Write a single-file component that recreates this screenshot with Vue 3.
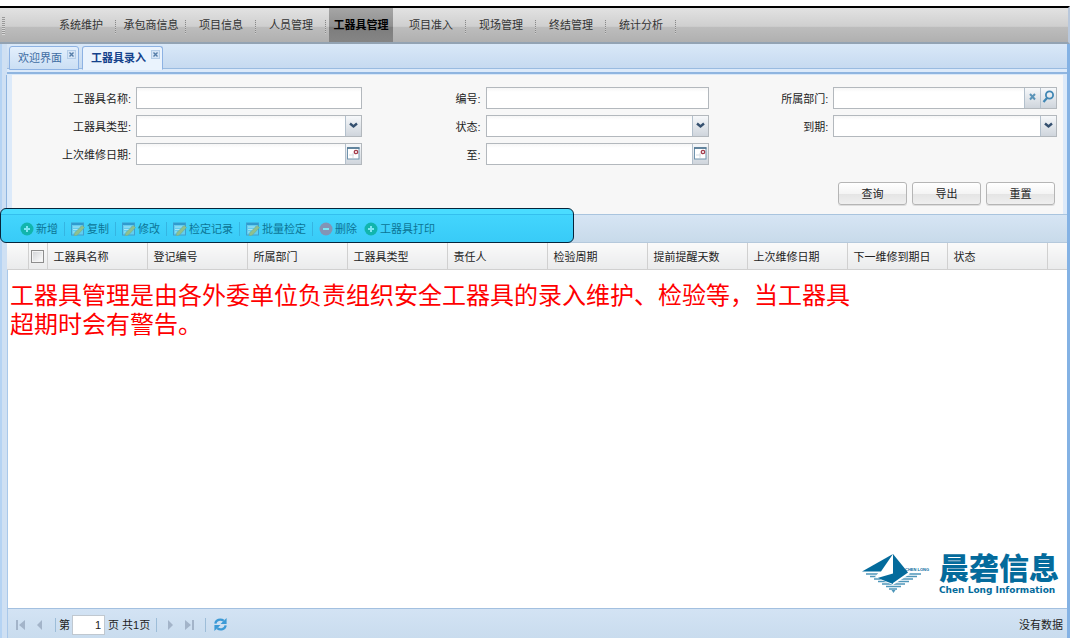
<script setup>
import { ref } from 'vue'

const menus = ['系统维护', '承包商信息', '项目信息', '人员管理', '工器具管理', '项目准入', '现场管理', '终结管理', '统计分析']
const activeMenu = ref('工器具管理')

const tabs = ['欢迎界面', '工器具录入']
const activeTab = ref('工器具录入')

const fields = [
  { id: 'name', label: '工器具名称', triggers: [] },
  { id: 'code', label: '编号', triggers: [] },
  { id: 'dept', label: '所属部门', triggers: ['clear', 'search'] },
  { id: 'type', label: '工器具类型', triggers: ['arrow'] },
  { id: 'state', label: '状态', triggers: ['arrow'] },
  { id: 'due', label: '到期', triggers: ['arrow'] },
  { id: 'from', label: '上次维修日期', triggers: ['date'] },
  { id: 'to', label: '至', triggers: ['date'] }
]
const triggerNames = { clear: '清除', search: '查找', arrow: '展开', date: '选择日期' }

const actions = [
  { text: '新增', icon: 'add', sep: true },
  { text: '复制', icon: 'edit', sep: true },
  { text: '修改', icon: 'edit', sep: true },
  { text: '检定记录', icon: 'edit', sep: true },
  { text: '批量检定', icon: 'edit', sep: true },
  { text: '删除', icon: 'remove', sep: false },
  { text: '工器具打印', icon: 'add', sep: false }
]

const columns = ['工器具名称', '登记编号', '所属部门', '工器具类型', '责任人', '检验周期', '提前提醒天数', '上次维修日期', '下一维修到期日', '状态']
const page = ref('1')
</script>

<template>
  <div class="window">
    <nav class="menu">
      <span class="grip"></span>
      <button
        v-for="m in menus"
        :key="m"
        type="button"
        class="menu-item"
        :class="{ active: m === activeMenu }"
        @click="activeMenu = m"
      >{{ m }}</button>
    </nav>

    <div class="workspace">
      <div class="tabs">
        <div v-for="t in tabs" :key="t" class="tab" :class="{ active: t === activeTab }">
          <button type="button" class="tab-label" @click="activeTab = t">{{ t }}</button>
          <button type="button" class="tab-close" aria-label="关闭">
            <svg viewBox="0 0 9 9"><path d="M2.5 2.5l4 4M6.5 2.5l-4 4" /></svg>
          </button>
        </div>
      </div>

      <form class="search" @submit.prevent>
        <div class="fields">
          <div v-for="f in fields" :key="f.id" class="field">
            <label :for="f.id">{{ f.label }}:</label>
            <div class="control">
              <input :id="f.id" type="text" />
              <button v-for="t in f.triggers" :key="t" type="button" class="trigger" :aria-label="triggerNames[t]">
                <svg v-if="t === 'arrow'" viewBox="0 0 15 20">
                  <path d="M4 7.5l3.500 3 3.500-3" fill="none" stroke="#35506f" stroke-width="2.4" />
                </svg>
                <svg v-else-if="t === 'date'" viewBox="0 0 15 20">
                  <rect x="1.5" y="4" width="11.500" height="11" fill="#fff" stroke="#6f93ad" />
                  <path d="M1 4h12.500" stroke="#4f7590" stroke-width="1.600" />
                  <path d="M7 9v5M3 11h5" stroke="#d5dde4" />
                  <circle cx="10" cy="8" r="1.700" fill="#fff" stroke="#a33c4c" stroke-width="1.300" />
                </svg>
                <svg v-else-if="t === 'clear'" viewBox="0 0 15 20">
                  <path d="M5 6l5 5.500M10 6l-5 5.500" stroke="#5b94b8" stroke-width="2" />
                </svg>
                <svg v-else viewBox="0 0 15 20">
                  <circle cx="8.5" cy="7" r="3.6" fill="none" stroke="#4187b4" stroke-width="1.8" />
                  <path d="M6 10l-3.5 4" stroke="#4187b4" stroke-width="2.2" />
                </svg>
              </button>
            </div>
          </div>
        </div>
        <div class="buttons">
          <button type="submit" class="btn">查询</button>
          <button type="button" class="btn">导出</button>
          <button type="reset" class="btn">重置</button>
        </div>
      </form>

      <div class="toolbar">
        <span class="highlight"></span>
        <template v-for="a in actions" :key="a.text">
          <button type="button" class="action">
            <svg v-if="a.icon === 'edit'" viewBox="0 0 14 14">
              <rect x="0.5" y="1" width="12" height="12" fill="#62cdf0" stroke="#3e9fd0" />
              <path d="M1 2h11" stroke="#2f9bd0" stroke-width="2" />
              <path d="M2 5h7M2 7.500h5M2 10h2" stroke="#a9e6f5" />
              <path d="M4 10.500L11 3.500l2.500 2L6.500 13l-3.500 1z" fill="#8fc08e" stroke="#6fae94" stroke-width=".6" />
            </svg>
            <svg v-else viewBox="0 0 14 14" :class="a.icon">
              <circle cx="7" cy="7" r="6.500" />
              <path class="sign" d="M4 7h6" />
              <path v-if="a.icon === 'add'" class="sign" d="M7 4v6" />
            </svg>
            <span>{{ a.text }}</span>
          </button>
          <i v-if="a.sep" class="sep"></i>
        </template>
      </div>

      <table class="grid">
        <colgroup>
          <col class="c-num" />
          <col class="c-check" />
          <col v-for="c in columns" :key="c" class="c-data" />
          <col />
        </colgroup>
        <thead>
          <tr>
            <th></th>
            <th class="check"><input type="checkbox" aria-label="全选" /></th>
            <th v-for="c in columns" :key="c" scope="col">{{ c }}</th>
            <th></th>
          </tr>
        </thead>
      </table>

      <div class="grid-body">
        <p class="note">工器具管理是由各外委单位负责组织安全工器具的录入维护、检验等，当工器具<br />超期时会有警告。</p>
        <div class="logo">
          <svg class="mark" viewBox="0 0 68 40">
            <path
              d="M4 21h55M8 23.500h47M12 26h39M16 28.500h31M20 31h23M24 33.500h15M27 36h8"
              stroke="#4f97ba"
              stroke-width="1.5"
            />
            <path d="M29.500 37h4l-2 3z" fill="#4f97ba" />
            <path d="M31 2L13 24 31 32 48 21z" fill="#fff" />
            <path d="M0 18.500L31 1 19 18.500z" fill="#046b9c" />
            <path d="M31 1L46 19.500 31 30z" fill="#046b9c" />
            <path d="M30.500 3L17 24.500 31 20.500z" fill="#fff" />
            <path d="M15.500 25L31 20.500V31z" fill="#046b9c" />
            <text x="43" y="18" font-size="4" font-weight="bold" fill="#046b9c">CHEN LONG</text>
          </svg>
          <div class="brand">
            <strong>晨砻信息</strong>
            <span>Chen Long Information</span>
          </div>
        </div>
      </div>

      <footer class="pager">
        <button type="button" aria-label="首页" class="nav"><svg viewBox="0 0 12 12"><path d="M1 1h2v10H1zM10 1v10L4 6z" /></svg></button>
        <button type="button" aria-label="上一页" class="nav"><svg viewBox="0 0 12 12"><path d="M8 1v10L3 6z" /></svg></button>
        <i class="sep"></i>
        <label for="page">第</label>
        <input id="page" v-model="page" type="text" />
        <span class="total">页 共1页</span>
        <i class="sep wide"></i>
        <button type="button" aria-label="下一页" class="nav"><svg viewBox="0 0 12 12"><path d="M4 1v10l5-5z" /></svg></button>
        <button type="button" aria-label="末页" class="nav"><svg viewBox="0 0 12 12"><path d="M2 1v10l6-5zM9 1h2v10H9z" /></svg></button>
        <i class="sep wide"></i>
        <button type="button" aria-label="刷新" class="refresh">
          <svg viewBox="0 0 16 16">
            <path d="M2.500 7C3 3 8 1.500 11.500 4M13.500 9C13 13 8 14.500 4.500 12" fill="none" stroke="#3c9ad6" stroke-width="2.400" />
            <path d="M14.500 1v6.500H8zM1.500 15V8.500H8z" fill="#3c9ad6" />
          </svg>
        </button>
        <span class="empty">没有数据</span>
      </footer>
    </div>
  </div>
</template>

<style>
body {
  background: #fff;
}
</style>

<style scoped>
.window {
  box-sizing: border-box;
  display: flex;
  flex-direction: column;
  min-height: 100vh;
  padding: 6px 3px 4px 0;
  font-family: "Liberation Sans", "Noto Sans CJK SC", sans-serif;
  font-size: 11px;
  line-height: 16px;
  color: #222;
}
button,
input {
  box-sizing: border-box;
  margin: 0;
  padding: 0;
  font: inherit;
  color: inherit;
}
button {
  border: 0;
  background: none;
  white-space: nowrap;
}
svg {
  display: block;
}
.menu {
  display: flex;
  height: 38px;
  box-sizing: border-box;
  border-top: 2px solid #000;
  border-bottom: 2px solid #93a3b3;
  border-right: 2px solid #b9c8dc;
  background: linear-gradient(#e2e2e2, #cfcfcf 54%, #bdbdbd 56%, #b0b0b0);
}
.grip {
  width: 3px;
  height: 18px;
  margin: 9px 41px 0 2px;
  background: repeating-linear-gradient(#999 0 1px, #d8d8d8 1px 2px);
}
.menu-item {
  position: relative;
  width: 70px;
  height: 34px;
  color: #333;
}
.menu-item::after {
  content: "";
  position: absolute;
  top: 12px;
  right: 0;
  width: 1px;
  height: 14px;
  background: repeating-linear-gradient(#888 0 1px, #ccc 1px 2px);
}
.menu-item.active {
  width: 64px;
  margin: 0 3px;
  background: linear-gradient(#a6a6a6, #8f8f8f 54%, #7d7d7d 56%, #858585);
  color: #000;
  font-weight: bold;
}
.menu-item.active::after {
  display: none;
}
.workspace {
  flex: 1;
  display: flex;
  flex-direction: column;
  margin-left: 2px;
  border-left: 5px solid #cfe0f3;
  border-right: 3px solid #84b2e4;
  box-shadow: -2px 0 #b5d3f3;
}
.tabs {
  display: flex;
  align-items: flex-end;
  gap: 3px;
  height: 31px;
  box-sizing: border-box;
  padding: 0 2px 5px;
  background: linear-gradient(#d9e8f8, #c6daf0 24px, #99bbe0 24px 25px, #dceafa 25px 28px, #8fb5e0 28px 30px, #d9e8f8 30px);
}
.tab {
  display: flex;
  align-items: flex-start;
  height: 24px;
  box-sizing: border-box;
  padding: 3px 2px 0 8px;
  border: 1px solid #8db2e3;
  border-radius: 3px 3px 0 0;
  background: linear-gradient(#e3effc, #cbdff4);
  color: #416da3;
}
.tab.active {
  background: #eaf3fd;
  border-bottom-color: #eaf3fd;
  color: #15428b;
  font-weight: bold;
}
.tab-close {
  width: 9px;
  height: 9px;
  margin-left: 5px;
  background: #d5e4f5;
  box-shadow: 0 0 0 1px #b4cde8 inset;
}
.tab-close path {
  stroke: #557da8;
  stroke-width: 1.400;
}
.search {
  box-sizing: border-box;
  padding: 12px 6px 9px 0;
  border-left: 5px solid #dceafa;
  border-right: 4px solid #dceafa;
  background: #f7f7f7;
  box-shadow: -1px 0 #8fb5e0;
}
.fields {
  display: grid;
  grid-template-columns: 350fr 348fr 348fr;
  row-gap: 6px;
}
.field {
  display: flex;
  align-items: center;
  gap: 5px;
}
.field label {
  width: 119px;
  padding-top: 2px;
  text-align: right;
}
.control {
  flex: 1;
  display: flex;
  min-width: 0;
  height: 22px;
  box-sizing: border-box;
  border: 1px solid #b3b8bd;
  background: #fff;
}
.control input {
  flex: 1;
  min-width: 0;
  padding: 0 4px;
  border: 0;
  background: linear-gradient(#f6f6f6, #fff 4px);
}
.trigger {
  width: 16px;
  border-left: 1px solid #b3c0cc;
  background: linear-gradient(#f6f8fa, #cfd5dc);
}
.buttons {
  display: flex;
  justify-content: flex-end;
  gap: 5px;
  margin-top: 17px;
  padding-right: 2px;
}
.btn {
  width: 69px;
  height: 23px;
  border: 1px solid #b5b5b5;
  border-radius: 3px;
  background: linear-gradient(#fff, #f4f4f4 50%, #e4e4e4 52%, #efefef);
  box-shadow: 0 1px #ddd;
}
.toolbar {
  position: relative;
  display: flex;
  align-items: center;
  height: 29px;
  box-sizing: border-box;
  padding-left: 13px;
  border-top: 1px solid #a9c4de;
  border-bottom: 1px solid #b5c9dc;
  background: linear-gradient(#d6e5f4, #c8daea);
}
.highlight {
  position: absolute;
  top: -7px;
  left: -7px;
  width: 574px;
  height: 35px;
  box-sizing: border-box;
  border: 1px solid #06243a;
  border-radius: 6px;
  background: linear-gradient(#4adcff 0 5px, #34bfee 5px 6px, #43d5fd 6px, #38cbf7);
}
.action {
  position: relative;
  display: flex;
  align-items: center;
  gap: 2px;
  color: #0c7596;
}
.action svg {
  width: 14px;
  height: 14px;
}
.add circle {
  fill: #12b5ad;
}
.remove circle {
  fill: #8294b5;
}
.sign {
  stroke: #7ce6f3;
  stroke-width: 2;
}
.action + .action {
  margin-left: 7px;
}
.sep {
  position: relative;
  width: 1px;
  height: 14px;
  margin: 0 6px;
  background: #9dbdd8;
}
.toolbar .sep {
  background: #35b5e2;
}
.grid {
  width: 100%;
  table-layout: fixed;
  border-collapse: collapse;
}
.c-num {
  width: 21px;
}
.c-check {
  width: 19px;
}
.c-data {
  width: 100px;
}
.grid th {
  height: 25px;
  padding: 1px 0 0 6px;
  border-right: 1px solid #d0d0d0;
  border-bottom: 1px solid #d0d0d0;
  background: linear-gradient(#fafafa, #eaebec);
  font-weight: normal;
  text-align: left;
  white-space: nowrap;
}
.grid th:last-child {
  border-right: 0;
}
.grid th.check {
  padding: 0;
  text-align: center;
}
.check input {
  appearance: none;
  display: block;
  width: 13px;
  height: 13px;
  margin: 0 auto;
  border: 1px solid #8d8d8d;
  background: linear-gradient(135deg, #d0d2d5, #fff);
  box-shadow: 0 0 0 1px #f4f4f4 inset;
}
.grid-body {
  flex: 1;
  display: flex;
  flex-direction: column;
  justify-content: space-between;
  border-left: 1px solid #a9c8ea;
  background: #fff;
}
.note {
  margin: 11px 0 0 2px;
  color: #f00;
  font-size: 24px;
  line-height: 29px;
}
.logo {
  display: flex;
  align-self: flex-end;
  gap: 9px;
  margin: 0 8px 12px 0;
  color: #046b9c;
}
.mark {
  width: 68px;
  height: 40px;
}
.brand strong {
  display: block;
  font-size: 30px;
  line-height: 32px;
  font-weight: 900;
}
.brand span {
  display: block;
  font-family: "DejaVu Sans", sans-serif;
  font-size: 9px;
  line-height: 11px;
  font-weight: bold;
}
.pager {
  display: flex;
  align-items: center;
  height: 30px;
  box-sizing: border-box;
  padding: 2px 4px 0 7px;
  border-top: 1px solid #a3c0e0;
  border-left: 1px solid #a9c8ea;
  background: linear-gradient(#d3e3f4, #c9dcee);
}
.nav {
  margin-right: 7px;
}
.nav svg {
  width: 12px;
  height: 12px;
  fill: #a3b4c9;
}
.pager .sep {
  margin: 0 3px 0 2px;
}
.pager .sep.wide {
  margin: 0 7px 0 3px;
}
.pager input {
  width: 33px;
  height: 20px;
  margin: 0 3px 0 2px;
  padding: 0 3px;
  border: 1px solid #c0c8d0;
  background: #fff;
  text-align: right;
}
.total {
  margin-right: 3px;
}
.refresh svg {
  width: 15px;
  height: 15px;
}
.empty {
  margin-left: auto;
}
</style>
